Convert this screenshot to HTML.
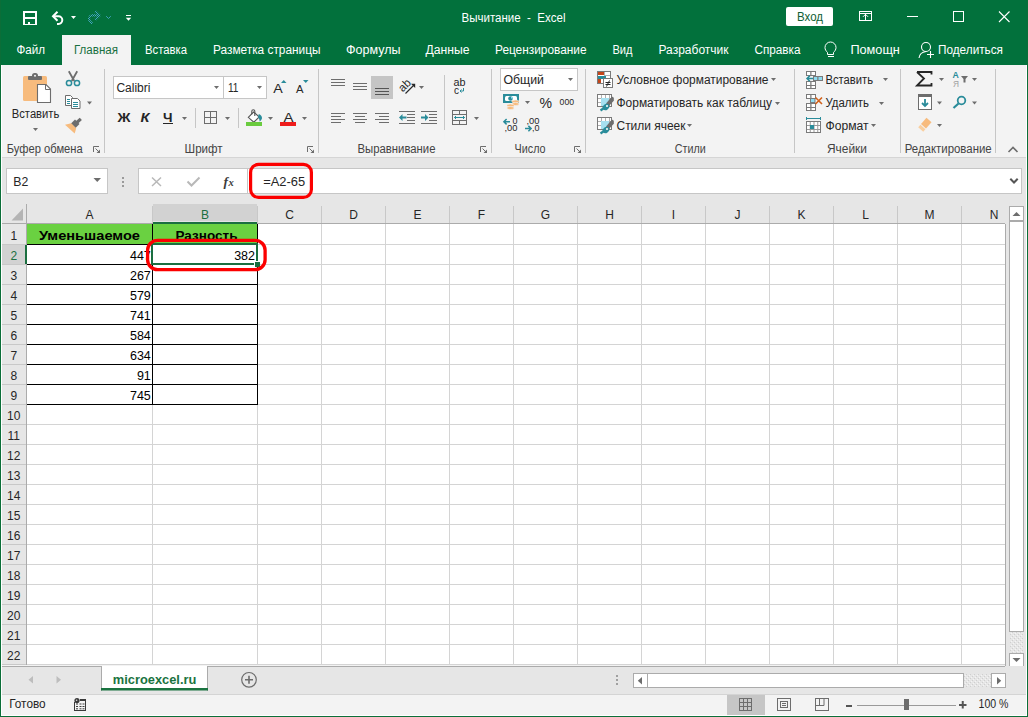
<!DOCTYPE html>
<html><head><meta charset="utf-8"><title>Excel</title>
<style>html,body{margin:0;padding:0;background:#f3f3f3;overflow:hidden}svg{display:block}</style>
</head><body>
<svg width="1028" height="717" viewBox="0 0 1028 717">
<defs><pattern id="dith" width="4" height="4" patternUnits="userSpaceOnUse"><rect width="4" height="4" fill="#e6e6e6"/><rect x="0" y="0" width="1" height="1" fill="#cfcfcf"/><rect x="2" y="2" width="1" height="1" fill="#cfcfcf"/><rect x="1" y="3" width="1" height="1" fill="#f4f4f4"/><rect x="3" y="1" width="1" height="1" fill="#f4f4f4"/></pattern></defs>
<rect x="0" y="0" width="1028" height="717" fill="#f3f3f3"/>
<rect x="0" y="0" width="1028" height="65" fill="#02713c" />
<rect x="23" y="11" width="14" height="14" fill="#fff" />
<rect x="25" y="13" width="10" height="4" fill="#02713c" />
<rect x="25" y="19" width="10" height="5" fill="#02713c" />
<rect x="28" y="22" width="2" height="2" fill="#fff" />
<path d="M53 16.3h5.5a3.8 3.8 0 0 1 0 7.6h-1.5" fill="none" stroke="#fff" stroke-width="2" />
<path d="M57.5 11.8l-4.5 4.5l4.5 4.5" fill="none" stroke="#fff" stroke-width="2" />
<path d="M71 16h5l-2.5 3z" fill="#fff" />
<defs><pattern id="chk" width="2" height="2" patternUnits="userSpaceOnUse"><rect x="0" y="0" width="1" height="1" fill="#45a6c6"/><rect x="1" y="1" width="1" height="1" fill="#45a6c6"/></pattern></defs>
<path d="M99 15.3h-7.2a3.6 3.6 0 0 0 -1.6 6.2l2.2 2.2" fill="none" stroke="url(#chk)" stroke-width="2.2" />
<path d="M95.3 11.2l4.3 4.3l-4.3 4.3" fill="none" stroke="url(#chk)" stroke-width="2.2" />
<path d="M106.2 16.2l2.3 2.3l2.3-2.3" fill="none" stroke="#45a6c6" stroke-width="0.9" />
<rect x="126" y="15" width="5" height="1" fill="#fff" />
<path d="M125.8 17.8h5.4l-2.7 3z" fill="#fff" />
<text xml:space="preserve" x="461.5" y="22" font-size="12" fill="#fff" textLength="104" lengthAdjust="spacingAndGlyphs" font-family="Liberation Sans" >Вычитание  -  Excel</text>
<rect x="786" y="7" width="47" height="19" rx="2" fill="#fff"/>
<text xml:space="preserve" x="797" y="21" font-size="12" fill="#0f5e34" textLength="26" lengthAdjust="spacingAndGlyphs" font-family="Liberation Sans" >Вход</text>
<rect x="859.5" y="11.5" width="12" height="9" fill="none" stroke="#fff" stroke-width="1" />
<rect x="860" y="13" width="11" height="1" fill="#fff" />
<rect x="865" y="14" width="1" height="6" fill="#fff" />
<path d="M863 16.8l2.5-2.5l2.5 2.5" fill="none" stroke="#fff" stroke-width="1" />
<rect x="907" y="16" width="11" height="1" fill="#fff" />
<rect x="953.5" y="11.5" width="10" height="10" fill="none" stroke="#fff" stroke-width="1" />
<path d="M999 11.5l10.5 10.5M1009.5 11.5l-10.5 10.5" fill="none" stroke="#fff" stroke-width="1.1" />
<rect x="62" y="35" width="69" height="30" fill="#f3f3f3" />
<text xml:space="preserve" x="16.5" y="54" font-size="12" fill="#fff" textLength="28.5" lengthAdjust="spacingAndGlyphs" font-family="Liberation Sans" >Файл</text>
<text xml:space="preserve" x="74" y="54" font-size="12" fill="#19703f" textLength="44" lengthAdjust="spacingAndGlyphs" font-family="Liberation Sans" >Главная</text>
<text xml:space="preserve" x="145" y="54" font-size="12" fill="#fff" textLength="42" lengthAdjust="spacingAndGlyphs" font-family="Liberation Sans" >Вставка</text>
<text xml:space="preserve" x="213" y="54" font-size="12" fill="#fff" textLength="107.5" lengthAdjust="spacingAndGlyphs" font-family="Liberation Sans" >Разметка страницы</text>
<text xml:space="preserve" x="346" y="54" font-size="12" fill="#fff" textLength="54.5" lengthAdjust="spacingAndGlyphs" font-family="Liberation Sans" >Формулы</text>
<text xml:space="preserve" x="425.5" y="54" font-size="12" fill="#fff" textLength="44" lengthAdjust="spacingAndGlyphs" font-family="Liberation Sans" >Данные</text>
<text xml:space="preserve" x="495" y="54" font-size="12" fill="#fff" textLength="91.5" lengthAdjust="spacingAndGlyphs" font-family="Liberation Sans" >Рецензирование</text>
<text xml:space="preserve" x="612.5" y="54" font-size="12" fill="#fff" textLength="20" lengthAdjust="spacingAndGlyphs" font-family="Liberation Sans" >Вид</text>
<text xml:space="preserve" x="658.5" y="54" font-size="12" fill="#fff" textLength="70" lengthAdjust="spacingAndGlyphs" font-family="Liberation Sans" >Разработчик</text>
<text xml:space="preserve" x="754.5" y="54" font-size="12" fill="#fff" textLength="46" lengthAdjust="spacingAndGlyphs" font-family="Liberation Sans" >Справка</text>
<text xml:space="preserve" x="850.4" y="54" font-size="12" fill="#fff" textLength="49.5" lengthAdjust="spacingAndGlyphs" font-family="Liberation Sans" >Помощн</text>
<text xml:space="preserve" x="938" y="54" font-size="12" fill="#fff" textLength="65" lengthAdjust="spacingAndGlyphs" font-family="Liberation Sans" >Поделиться</text>
<path d="M827.5 52.5c-1.5-1.5-2.5-3-2.5-5a5.5 5.5 0 0 1 11 0c0 2-1 3.5-2.5 5v2h-6z" fill="none" stroke="#fff" stroke-width="1" />
<rect x="828" y="56" width="6" height="1" fill="#fff" />
<circle cx="926" cy="47" r="4.5" fill="none" stroke="#fff" stroke-width="1.1"/>
<path d="M919 58c0.5-4 3-6 7-6.5" fill="none" stroke="#fff" stroke-width="1.1" />
<path d="M930.5 51v7M927 54.5h7" fill="none" stroke="#fff" stroke-width="1.1" />
<rect x="0" y="65" width="1028" height="92" fill="#f3f3f3" />
<rect x="0" y="157" width="1028" height="1" fill="#d5d5d5" />
<rect x="104" y="69" width="1" height="84" fill="#c6c6c6" />
<rect x="318" y="69" width="1" height="84" fill="#c6c6c6" />
<rect x="491" y="69" width="1" height="84" fill="#c6c6c6" />
<rect x="585" y="69" width="1" height="84" fill="#c6c6c6" />
<rect x="794" y="69" width="1" height="84" fill="#c6c6c6" />
<rect x="900" y="69" width="1" height="84" fill="#c6c6c6" />
<rect x="995" y="69" width="1" height="84" fill="#c6c6c6" />
<rect x="195" y="108" width="1" height="20" fill="#c6c6c6" />
<rect x="238" y="108" width="1" height="20" fill="#c6c6c6" />
<rect x="444" y="75" width="1" height="55" fill="#c6c6c6" />
<text xml:space="preserve" x="6.7" y="153" font-size="12" fill="#444" textLength="76" lengthAdjust="spacingAndGlyphs" font-family="Liberation Sans" >Буфер обмена</text>
<text xml:space="preserve" x="184.6" y="153" font-size="12" fill="#444" textLength="38" lengthAdjust="spacingAndGlyphs" font-family="Liberation Sans" >Шрифт</text>
<text xml:space="preserve" x="357.5" y="153" font-size="12" fill="#444" textLength="78" lengthAdjust="spacingAndGlyphs" font-family="Liberation Sans" >Выравнивание</text>
<text xml:space="preserve" x="514.6" y="153" font-size="12" fill="#444" textLength="31" lengthAdjust="spacingAndGlyphs" font-family="Liberation Sans" >Число</text>
<text xml:space="preserve" x="674.7" y="153" font-size="12" fill="#444" textLength="31" lengthAdjust="spacingAndGlyphs" font-family="Liberation Sans" >Стили</text>
<text xml:space="preserve" x="827" y="153" font-size="12" fill="#444" textLength="40" lengthAdjust="spacingAndGlyphs" font-family="Liberation Sans" >Ячейки</text>
<text xml:space="preserve" x="904.7" y="153" font-size="12" fill="#444" textLength="87" lengthAdjust="spacingAndGlyphs" font-family="Liberation Sans" >Редактирование</text>
<path d="M93.5 152v-5.5h5.5" fill="none" stroke="#6d6d6d" stroke-width="1" />
<path d="M95.5 148.5l3.5 3.5" fill="none" stroke="#6d6d6d" stroke-width="1" />
<path d="M100 149.5v3.5h-3.5z" fill="#6d6d6d" />
<path d="M307.5 152v-5.5h5.5" fill="none" stroke="#6d6d6d" stroke-width="1" />
<path d="M309.5 148.5l3.5 3.5" fill="none" stroke="#6d6d6d" stroke-width="1" />
<path d="M314 149.5v3.5h-3.5z" fill="#6d6d6d" />
<path d="M480.5 152v-5.5h5.5" fill="none" stroke="#6d6d6d" stroke-width="1" />
<path d="M482.5 148.5l3.5 3.5" fill="none" stroke="#6d6d6d" stroke-width="1" />
<path d="M487 149.5v3.5h-3.5z" fill="#6d6d6d" />
<path d="M574.5 152v-5.5h5.5" fill="none" stroke="#6d6d6d" stroke-width="1" />
<path d="M576.5 148.5l3.5 3.5" fill="none" stroke="#6d6d6d" stroke-width="1" />
<path d="M581 149.5v3.5h-3.5z" fill="#6d6d6d" />
<path d="M1008.5 152l4.5-4.5l4.5 4.5" fill="none" stroke="#6d6d6d" stroke-width="1.6" />
<rect x="23" y="76" width="24" height="25" rx="1.5" fill="#f7bb7d"/>
<rect x="28" y="76" width="14" height="4" rx="1" fill="#6d6d6d"/>
<rect x="32" y="73" width="6" height="5" rx="2.5" fill="#6d6d6d"/>
<circle cx="35" cy="75.8" r="1" fill="#f3f3f3"/>
<path d="M37.5 84.5h8.5l4.5 4.5v13.5h-13z" fill="#fff" stroke="#6d6d6d" stroke-width="1.1" />
<path d="M45.5 84.5v5h5" fill="none" stroke="#6d6d6d" stroke-width="1" />
<text xml:space="preserve" x="11.8" y="118" font-size="12" fill="#262626" textLength="47.5" lengthAdjust="spacingAndGlyphs" font-family="Liberation Sans" >Вставить</text>
<path d="M33 128h5l-2.5 3z" fill="#6d6d6d" />
<path d="M68.8 71.2l5.5 9.8M77.2 71.2l-5.5 9.8" fill="none" stroke="#6d6d6d" stroke-width="1.8" />
<circle cx="69" cy="83" r="2.6" fill="none" stroke="#2a8c9a" stroke-width="1.5"/>
<circle cx="77" cy="83" r="2.6" fill="none" stroke="#2a8c9a" stroke-width="1.5"/>
<path d="M65.5 95.5h5l2 2v8h-7z" fill="#fff" stroke="#6d6d6d" stroke-width="1" />
<path d="M71.5 98.5h6l2.5 2.5v7.5h-8.5z" fill="#fff" stroke="#6d6d6d" stroke-width="1" />
<rect x="67" y="99" width="3" height="1" fill="#2a8c9a" />
<rect x="67" y="101" width="3" height="1" fill="#2a8c9a" />
<rect x="67" y="103" width="3" height="1" fill="#2a8c9a" />
<rect x="73" y="102" width="5" height="1" fill="#2a8c9a" />
<rect x="73" y="104" width="5" height="1" fill="#2a8c9a" />
<rect x="73" y="106" width="5" height="1" fill="#2a8c9a" />
<path d="M87 101.5h5l-2.5 3z" fill="#6d6d6d" />
<path d="M80.8 118.8l-4.5 4.2" fill="none" stroke="#6d6d6d" stroke-width="3.2" />
<path d="M71 123.5l4-4l4.5 4.5l-4 4z" fill="#6d6d6d" />
<path d="M65 124.8l6.2-1.5l5 5l-1.5 5.2z" fill="#f7bb7d" />
<rect x="113.5" y="76.5" width="110" height="22" fill="#fff" stroke="#c6c6c6" stroke-width="1" />
<rect x="223.5" y="76.5" width="43" height="22" fill="#fff" stroke="#c6c6c6" stroke-width="1" />
<text xml:space="preserve" x="116.4" y="92" font-size="12" fill="#262626" textLength="34" lengthAdjust="spacingAndGlyphs" font-family="Liberation Sans" >Calibri</text>
<text xml:space="preserve" x="228" y="92" font-size="12" fill="#262626" textLength="10.5" lengthAdjust="spacingAndGlyphs" font-family="Liberation Sans" >11</text>
<path d="M214 86h5l-2.5 3z" fill="#6d6d6d" />
<path d="M257 86h5l-2.5 3z" fill="#6d6d6d" />
<text xml:space="preserve" x="273.3" y="93" font-size="13" fill="#262626" textLength="9.5" lengthAdjust="spacingAndGlyphs" font-family="Liberation Sans" >A</text>
<path d="M281 83h5.5l-2.75-3z" fill="#2a8c9a" />
<text xml:space="preserve" x="296" y="93" font-size="10" fill="#262626" textLength="7.5" lengthAdjust="spacingAndGlyphs" font-family="Liberation Sans" >A</text>
<path d="M303 80h5.5l-2.75 3z" fill="#2a8c9a" />
<text xml:space="preserve" x="117.5" y="122" font-size="13" fill="#262626" font-weight="bold" textLength="13" lengthAdjust="spacingAndGlyphs" font-family="Liberation Sans" >Ж</text>
<text xml:space="preserve" x="140.5" y="122" font-size="12" fill="#262626" font-weight="bold" textLength="9" lengthAdjust="spacingAndGlyphs" font-family="Liberation Sans" font-style="italic">К</text>
<text xml:space="preserve" x="163" y="122" font-size="12" fill="#262626" font-weight="bold" textLength="9.5" lengthAdjust="spacingAndGlyphs" font-family="Liberation Sans" >Ч</text>
<rect x="163" y="123" width="10" height="1" fill="#262626" />
<path d="M182 117h5l-2.5 3z" fill="#6d6d6d" />
<rect x="204.5" y="111.5" width="12" height="12" fill="none" stroke="#6d6d6d" stroke-width="1" />
<rect x="205" y="117" width="11" height="1" fill="#6d6d6d" />
<rect x="210" y="112" width="1" height="11" fill="#6d6d6d" />
<path d="M225 117h5l-2.5 3z" fill="#6d6d6d" />
<path d="M248.3 117.3l5.3-5.3l5.6 5l-5.4 5.2z" fill="#fff" stroke="#555" stroke-width="1.1" />
<path d="M251.8 114.2v-3a1.5 1.5 0 0 1 3 0v4.8" fill="none" stroke="#555" stroke-width="1.1" />
<path d="M258.8 114c2 0.8 3.4 2.4 3.2 4.2c-0.3 1.6-1.4 2.8-2.4 3.3c0-1.8-0.6-3.3-1.6-4.3z" fill="#2a8c9a" />
<rect x="246" y="122" width="16" height="4" fill="#6acb3e" />
<path d="M268 117h5l-2.5 3z" fill="#6d6d6d" />
<text xml:space="preserve" x="283.5" y="121.5" font-size="13" fill="#262626" textLength="10" lengthAdjust="spacingAndGlyphs" font-family="Liberation Sans" >A</text>
<rect x="280" y="122" width="16" height="4" fill="#ee1c1c" />
<path d="M302 117h5l-2.5 3z" fill="#6d6d6d" />
<rect x="331" y="79" width="14" height="1" fill="#6d6d6d" />
<rect x="331" y="82" width="14" height="1" fill="#6d6d6d" />
<rect x="331" y="85" width="14" height="1" fill="#6d6d6d" />
<rect x="353" y="83" width="14" height="1" fill="#6d6d6d" />
<rect x="353" y="86" width="14" height="1" fill="#6d6d6d" />
<rect x="353" y="89" width="14" height="1" fill="#6d6d6d" />
<rect x="371" y="76" width="22" height="23" fill="#c5c5c5" />
<rect x="375" y="88" width="14" height="1" fill="#555" />
<rect x="375" y="91" width="14" height="1" fill="#555" />
<rect x="375" y="94" width="14" height="1" fill="#555" />
<text x="0" y="4" font-size="11.5" fill="#262626" text-anchor="middle" font-family="Liberation Sans" transform="translate(404.5 85.2) rotate(-45)">ab</text>
<path d="M405.5 93.5l8-8" fill="none" stroke="#262626" stroke-width="1.1" />
<path d="M415.2 83.8v4.2l-4.2-4.2z" fill="#262626" />
<path d="M419 86h5l-2.5 3z" fill="#6d6d6d" />
<rect x="331" y="113" width="14" height="1" fill="#6d6d6d" />
<rect x="353" y="113" width="14" height="1" fill="#6d6d6d" />
<rect x="375" y="113" width="14" height="1" fill="#6d6d6d" />
<rect x="331" y="116" width="10" height="1" fill="#6d6d6d" />
<rect x="355" y="116" width="10" height="1" fill="#6d6d6d" />
<rect x="379" y="116" width="10" height="1" fill="#6d6d6d" />
<rect x="331" y="119" width="14" height="1" fill="#6d6d6d" />
<rect x="353" y="119" width="14" height="1" fill="#6d6d6d" />
<rect x="375" y="119" width="14" height="1" fill="#6d6d6d" />
<rect x="331" y="122" width="10" height="1" fill="#6d6d6d" />
<rect x="355" y="122" width="10" height="1" fill="#6d6d6d" />
<rect x="379" y="122" width="10" height="1" fill="#6d6d6d" />
<rect x="399" y="111" width="16" height="1" fill="#6d6d6d" />
<rect x="399" y="123" width="16" height="1" fill="#6d6d6d" />
<rect x="407" y="114" width="8" height="1" fill="#6d6d6d" />
<rect x="407" y="117" width="8" height="1" fill="#6d6d6d" />
<rect x="407" y="120" width="8" height="1" fill="#6d6d6d" />
<path d="M399 117.5l3.5-3.5v2.5h4v2h-4v2.5z" fill="#2a8c9a" />
<rect x="421" y="111" width="16" height="1" fill="#6d6d6d" />
<rect x="421" y="123" width="16" height="1" fill="#6d6d6d" />
<rect x="429" y="114" width="8" height="1" fill="#6d6d6d" />
<rect x="429" y="117" width="8" height="1" fill="#6d6d6d" />
<rect x="429" y="120" width="8" height="1" fill="#6d6d6d" />
<path d="M428.5 117.5l-3.5-3.5v2.5h-4v2h4v2.5z" fill="#2a8c9a" />
<text xml:space="preserve" x="453.5" y="86" font-size="10" fill="#262626" textLength="12" lengthAdjust="spacingAndGlyphs" font-family="Liberation Sans" >ab</text>
<text xml:space="preserve" x="454" y="93.5" font-size="10" fill="#262626" font-family="Liberation Sans" >c</text>
<path d="M463.5 88v3h-3.5M461.5 89.5l-1.5 1.5l1.5 1.5" fill="none" stroke="#2a8c9a" stroke-width="1" />
<rect x="452.5" y="110.5" width="14" height="14" fill="none" stroke="#6d6d6d" stroke-width="1" />
<rect x="453" y="114" width="13" height="1" fill="#6d6d6d" />
<rect x="453" y="120" width="13" height="1" fill="#6d6d6d" />
<rect x="459" y="111" width="1" height="3" fill="#6d6d6d" />
<rect x="459" y="121" width="1" height="3" fill="#6d6d6d" />
<path d="M454.5 117.5h10M456 116l-1.5 1.5l1.5 1.5M463 116l1.5 1.5l-1.5 1.5" fill="none" stroke="#2a8c9a" stroke-width="1" />
<path d="M474 117h5l-2.5 3z" fill="#6d6d6d" />
<rect x="500.5" y="68.5" width="77" height="22" fill="#fff" stroke="#c6c6c6" stroke-width="1" />
<text xml:space="preserve" x="503.4" y="84" font-size="12" fill="#262626" textLength="40.5" lengthAdjust="spacingAndGlyphs" font-family="Liberation Sans" >Общий</text>
<path d="M568 78h5l-2.5 3z" fill="#6d6d6d" />
<rect x="503" y="94" width="16" height="9" fill="#2a8c9a" />
<rect x="505" y="96" width="12" height="5" rx="1.5" fill="#fff"/>
<circle cx="510.5" cy="98.5" r="2.3" fill="#2a8c9a"/>
<rect x="511" y="97" width="2" height="1.5" fill="#8fdcf0" />
<ellipse cx="515.5" cy="101.5" rx="3.6" ry="1.5" fill="#f7bb7d" stroke="#f3f3f3" stroke-width="0.6"/>
<ellipse cx="515.5" cy="104" rx="3.6" ry="1.5" fill="#f7bb7d" stroke="#f3f3f3" stroke-width="0.6"/>
<ellipse cx="510.5" cy="105.5" rx="3.6" ry="1.5" fill="#f7bb7d" stroke="#f3f3f3" stroke-width="0.6"/>
<ellipse cx="510.5" cy="108" rx="3.6" ry="1.5" fill="#f7bb7d" stroke="#f3f3f3" stroke-width="0.6"/>
<path d="M525 101h5l-2.5 3z" fill="#6d6d6d" />
<text xml:space="preserve" x="539.5" y="108" font-size="14" fill="#262626" textLength="12.5" lengthAdjust="spacingAndGlyphs" font-family="Liberation Sans" >%</text>
<text xml:space="preserve" x="559.6" y="105" font-size="9.5" fill="#262626" textLength="14.5" lengthAdjust="spacingAndGlyphs" font-family="Liberation Sans" >000</text>
<text xml:space="preserve" x="512.5" y="123.6" font-size="8.5" fill="#262626" textLength="5" lengthAdjust="spacingAndGlyphs" font-family="Liberation Sans" >0</text>
<text xml:space="preserve" x="504.5" y="130.9" font-size="8.5" fill="#262626" textLength="13" lengthAdjust="spacingAndGlyphs" font-family="Liberation Sans" >,00</text>
<path d="M503.8 121.7h6.2M506.6 119l-2.7 2.7l2.7 2.7" fill="none" stroke="#2a8c9a" stroke-width="1.5" />
<text xml:space="preserve" x="526.5" y="123.6" font-size="8.5" fill="#262626" textLength="13" lengthAdjust="spacingAndGlyphs" font-family="Liberation Sans" >,00</text>
<text xml:space="preserve" x="532" y="130.9" font-size="8.5" fill="#262626" textLength="7.5" lengthAdjust="spacingAndGlyphs" font-family="Liberation Sans" >,0</text>
<path d="M525 128.6h6.2M528.4 125.9l2.7 2.7l-2.7 2.7" fill="none" stroke="#2a8c9a" stroke-width="1.5" />
<rect x="597.5" y="71.5" width="13" height="12" fill="#fff" stroke="#7a7a7a" stroke-width="1" />
<rect x="604" y="72" width="1" height="4" fill="#b0b0b0" />
<rect x="604" y="75" width="6" height="1" fill="#b0b0b0" />
<rect x="598" y="72" width="6" height="3" fill="#c4461a" />
<rect x="598" y="76" width="8" height="3" fill="#2a8c9a" />
<rect x="598" y="79" width="3" height="4" fill="#c4461a" />
<rect x="603.5" y="78.5" width="9" height="9" fill="#fff" stroke="#7a7a7a" stroke-width="1" />
<path d="M605.5 82.5h5M605.5 84.5h5M609.5 80.5l-3 6" fill="none" stroke="#262626" stroke-width="1" />
<text xml:space="preserve" x="616.5" y="84" font-size="12" fill="#262626" textLength="152" lengthAdjust="spacingAndGlyphs" font-family="Liberation Sans" >Условное форматирование</text>
<path d="M771 78h5l-2.5 3z" fill="#6d6d6d" />
<rect x="597.5" y="94.5" width="14" height="12" fill="#fff" stroke="#7a7a7a" stroke-width="1" />
<rect x="601" y="95" width="1" height="11" fill="#b0b0b0" />
<rect x="605" y="95" width="1" height="11" fill="#b0b0b0" />
<rect x="609" y="95" width="1" height="11" fill="#b0b0b0" />
<rect x="598" y="98" width="13" height="1" fill="#b0b0b0" />
<rect x="598" y="102" width="13" height="1" fill="#b0b0b0" />
<rect x="601" y="98" width="8" height="8" fill="#a6e0f0" />
<path d="M606 103.5l6-7l1.8 1.2v3l-4.8 5.3z" fill="#6d6d6d" />
<ellipse cx="0" cy="0" rx="3.6" ry="2.8" fill="#2a8c9a" transform="translate(606 107) rotate(-40)"/>
<path d="M600.5 110.5l3.5-2.5" fill="none" stroke="#2a8c9a" stroke-width="2.2" />
<circle cx="607" cy="106" r="1" fill="#fff"/>
<rect x="597.5" y="117.5" width="14" height="12" fill="#fff" stroke="#7a7a7a" stroke-width="1" />
<rect x="601" y="118" width="1" height="11" fill="#b0b0b0" />
<rect x="605" y="118" width="1" height="11" fill="#b0b0b0" />
<rect x="609" y="118" width="1" height="11" fill="#b0b0b0" />
<rect x="598" y="121" width="13" height="1" fill="#b0b0b0" />
<rect x="598" y="125" width="13" height="1" fill="#b0b0b0" />
<rect x="601" y="121" width="8" height="8" fill="#a6e0f0" />
<path d="M606 126.5l6-7l1.8 1.2v3l-4.8 5.3z" fill="#6d6d6d" />
<ellipse cx="0" cy="0" rx="3.6" ry="2.8" fill="#2a8c9a" transform="translate(606 130) rotate(-40)"/>
<path d="M600.5 133.5l3.5-2.5" fill="none" stroke="#2a8c9a" stroke-width="2.2" />
<circle cx="607" cy="129" r="1" fill="#fff"/>
<text xml:space="preserve" x="616.5" y="107" font-size="12" fill="#262626" textLength="155.5" lengthAdjust="spacingAndGlyphs" font-family="Liberation Sans" >Форматировать как таблицу</text>
<path d="M775 102h5l-2.5 3z" fill="#6d6d6d" />
<text xml:space="preserve" x="616.5" y="130" font-size="12" fill="#262626" textLength="69" lengthAdjust="spacingAndGlyphs" font-family="Liberation Sans" >Стили ячеек</text>
<path d="M687 124h5l-2.5 3z" fill="#6d6d6d" />
<rect x="806.5" y="71.5" width="4.5" height="4" fill="#fff" stroke="#7a7a7a" stroke-width="1" />
<rect x="811.0" y="71.5" width="4.5" height="4" fill="#fff" stroke="#7a7a7a" stroke-width="1" />
<rect x="813.5" y="76.5" width="4.5" height="4" fill="#8fdcf0" stroke="#7a7a7a" stroke-width="1" />
<rect x="818.0" y="76.5" width="4.5" height="4" fill="#8fdcf0" stroke="#7a7a7a" stroke-width="1" />
<rect x="806.5" y="81.5" width="4.5" height="4" fill="#fff" stroke="#7a7a7a" stroke-width="1" />
<rect x="811.0" y="81.5" width="4.5" height="4" fill="#fff" stroke="#7a7a7a" stroke-width="1" />
<rect x="806.5" y="85.5" width="4.5" height="3" fill="#fff" stroke="#7a7a7a" stroke-width="1" />
<rect x="811.0" y="85.5" width="4.5" height="3" fill="#fff" stroke="#7a7a7a" stroke-width="1" />
<path d="M807 78.5h6M809.8 75.8l-2.7 2.7l2.7 2.7" fill="none" stroke="#2a8c9a" stroke-width="1.6" />
<text xml:space="preserve" x="825.5" y="84" font-size="12" fill="#262626" textLength="47.5" lengthAdjust="spacingAndGlyphs" font-family="Liberation Sans" >Вставить</text>
<path d="M883 78h5l-2.5 3z" fill="#6d6d6d" />
<rect x="806.5" y="94.5" width="4.5" height="4" fill="#fff" stroke="#7a7a7a" stroke-width="1" />
<rect x="811.0" y="94.5" width="4.5" height="4" fill="#fff" stroke="#7a7a7a" stroke-width="1" />
<rect x="810.5" y="98.5" width="4.5" height="4" fill="#8fdcf0" stroke="#7a7a7a" stroke-width="1" />
<rect x="806.5" y="103.5" width="4.5" height="4" fill="#fff" stroke="#7a7a7a" stroke-width="1" />
<rect x="811.0" y="103.5" width="4.5" height="4" fill="#fff" stroke="#7a7a7a" stroke-width="1" />
<rect x="806.5" y="107.5" width="4.5" height="3" fill="#fff" stroke="#7a7a7a" stroke-width="1" />
<rect x="811.0" y="107.5" width="4.5" height="3" fill="#fff" stroke="#7a7a7a" stroke-width="1" />
<path d="M815.5 97.5l6.5 6.5M822 97.5l-6.5 6.5" fill="none" stroke="#d1611a" stroke-width="1.6" />
<text xml:space="preserve" x="825.5" y="107" font-size="12" fill="#262626" textLength="43.5" lengthAdjust="spacingAndGlyphs" font-family="Liberation Sans" >Удалить</text>
<path d="M879 102h5l-2.5 3z" fill="#6d6d6d" />
<path d="M806.5 118.5h14M806.5 117v3M820.5 117v3" fill="none" stroke="#2a8c9a" stroke-width="1" />
<rect x="806.5" y="121.5" width="14" height="11" fill="#fff" stroke="#7a7a7a" stroke-width="1" />
<rect x="809.75" y="122" width="1" height="10" fill="#9a9a9a" />
<rect x="813.5" y="122" width="1" height="10" fill="#9a9a9a" />
<rect x="817.25" y="122" width="1" height="10" fill="#9a9a9a" />
<rect x="807" y="125" width="13" height="1" fill="#9a9a9a" />
<rect x="807" y="129" width="13" height="1" fill="#9a9a9a" />
<rect x="810" y="125" width="4" height="4" fill="#2a8c9a" />
<text xml:space="preserve" x="825.5" y="130" font-size="12" fill="#262626" textLength="43" lengthAdjust="spacingAndGlyphs" font-family="Liberation Sans" >Формат</text>
<path d="M871 124h5l-2.5 3z" fill="#6d6d6d" />
<path d="M917 72h14.5v2.5M917 72l7 6.5l-7 7h14.5v-2.5" fill="none" stroke="#262626" stroke-width="1.8" />
<path d="M939 78h5l-2.5 3z" fill="#6d6d6d" />
<text xml:space="preserve" x="952.6" y="77.6" font-size="8.8" fill="#2a8c9a" font-weight="bold" textLength="6.3" lengthAdjust="spacingAndGlyphs" font-family="Liberation Sans" >A</text>
<text xml:space="preserve" x="953" y="86.9" font-size="8.8" fill="#a0a0a0" textLength="6" lengthAdjust="spacingAndGlyphs" font-family="Liberation Sans" >Я</text>
<path d="M961 76h7l-2.5 3v3.5h-2v-3.5z" fill="#6d6d6d" />
<path d="M972 78h5l-2.5 3z" fill="#6d6d6d" />
<rect x="918.5" y="94.5" width="13" height="15" fill="#fff" stroke="#6d6d6d" stroke-width="1" />
<rect x="918" y="94" width="14" height="3" fill="#6d6d6d" />
<path d="M925 99v7M922 103l3 3l3-3" fill="none" stroke="#2a8c9a" stroke-width="1.8" />
<path d="M937 101.5h5l-2.5 3z" fill="#6d6d6d" />
<circle cx="961.5" cy="100.5" r="3.8" fill="none" stroke="#2a8c9a" stroke-width="1.8"/>
<path d="M958.5 103.5l-5 4.5" fill="none" stroke="#2a8c9a" stroke-width="2.2" />
<path d="M972 101.5h5l-2.5 3z" fill="#6d6d6d" />
<path d="M921 124l5.5-6.2l5 4.5l-5.5 6.2z" fill="#f7bb7d" />
<path d="M918.2 127.2l2.2-2.5l5 4.5l-2.2 2.5z" fill="#f9cf9f" />
<path d="M937 124h5l-2.5 3z" fill="#6d6d6d" />
<rect x="0" y="158" width="1028" height="46" fill="#e6e6e6" />
<rect x="6.5" y="168.5" width="101" height="25" fill="#fff" stroke="#c6c6c6" stroke-width="1" />
<text xml:space="preserve" x="13.3" y="186" font-size="12" fill="#262626" textLength="15" lengthAdjust="spacingAndGlyphs" font-family="Liberation Sans" >B2</text>
<path d="M93.5 178h7.5l-3.75 4z" fill="#6d6d6d" />
<rect x="122" y="177" width="2" height="2" fill="#9a9a9a" />
<rect x="122" y="181" width="2" height="2" fill="#9a9a9a" />
<rect x="122" y="185" width="2" height="2" fill="#9a9a9a" />
<rect x="138.5" y="168.5" width="109" height="25" fill="#fff" stroke="#c6c6c6" stroke-width="1" />
<path d="M152 177.5l9 8.5M161 177.5l-9 8.5" fill="none" stroke="#b8b8b8" stroke-width="1.5" />
<path d="M187.5 181.5l4 4l8-8" fill="none" stroke="#b8b8b8" stroke-width="2" />
<text x="223.5" y="186" font-size="13.5" fill="#3c3c3c" font-weight="bold" font-style="italic" font-family="Liberation Serif">f</text>
<text x="228.6" y="186" font-size="10.5" fill="#3c3c3c" font-weight="bold" font-style="italic" font-family="Liberation Serif">x</text>
<rect x="247.5" y="168.5" width="774" height="25" fill="#fff" stroke="#c6c6c6" stroke-width="1" />
<text xml:space="preserve" x="263.2" y="186" font-size="12.5" fill="#262626" textLength="42" lengthAdjust="spacingAndGlyphs" font-family="Liberation Sans" >=A2-65</text>
<path d="M1010.3 178.8l3.7 3.7l3.7-3.7" fill="none" stroke="#555" stroke-width="2" />
<rect x="250.6" y="164.4" width="60.8" height="33" rx="8" ry="8" fill="none" stroke="#fc0000" stroke-width="3.2"/>
<rect x="1" y="204" width="1008" height="20" fill="#e6e6e6" />
<path d="M11.5 220.5h11.5v-12z" fill="#b4b4b4" />
<rect x="153" y="204" width="104" height="19" fill="#d2d2d2" />
<rect x="27" y="224" width="978" height="441" fill="#ffffff" />
<rect x="1" y="224" width="26" height="441" fill="#e6e6e6" />
<rect x="1" y="245" width="25" height="19" fill="#d2d2d2" />
<rect x="152" y="224" width="1" height="441" fill="#d4d4d4" />
<rect x="257" y="224" width="1" height="441" fill="#d4d4d4" />
<rect x="321" y="224" width="1" height="441" fill="#d4d4d4" />
<rect x="385" y="224" width="1" height="441" fill="#d4d4d4" />
<rect x="449" y="224" width="1" height="441" fill="#d4d4d4" />
<rect x="513" y="224" width="1" height="441" fill="#d4d4d4" />
<rect x="577" y="224" width="1" height="441" fill="#d4d4d4" />
<rect x="641" y="224" width="1" height="441" fill="#d4d4d4" />
<rect x="705" y="224" width="1" height="441" fill="#d4d4d4" />
<rect x="769" y="224" width="1" height="441" fill="#d4d4d4" />
<rect x="833" y="224" width="1" height="441" fill="#d4d4d4" />
<rect x="897" y="224" width="1" height="441" fill="#d4d4d4" />
<rect x="961" y="224" width="1" height="441" fill="#d4d4d4" />
<rect x="27" y="244" width="978" height="1" fill="#d4d4d4" />
<rect x="27" y="264" width="978" height="1" fill="#d4d4d4" />
<rect x="27" y="284" width="978" height="1" fill="#d4d4d4" />
<rect x="27" y="304" width="978" height="1" fill="#d4d4d4" />
<rect x="27" y="324" width="978" height="1" fill="#d4d4d4" />
<rect x="27" y="344" width="978" height="1" fill="#d4d4d4" />
<rect x="27" y="364" width="978" height="1" fill="#d4d4d4" />
<rect x="27" y="384" width="978" height="1" fill="#d4d4d4" />
<rect x="27" y="404" width="978" height="1" fill="#d4d4d4" />
<rect x="27" y="424" width="978" height="1" fill="#d4d4d4" />
<rect x="27" y="444" width="978" height="1" fill="#d4d4d4" />
<rect x="27" y="464" width="978" height="1" fill="#d4d4d4" />
<rect x="27" y="484" width="978" height="1" fill="#d4d4d4" />
<rect x="27" y="504" width="978" height="1" fill="#d4d4d4" />
<rect x="27" y="524" width="978" height="1" fill="#d4d4d4" />
<rect x="27" y="544" width="978" height="1" fill="#d4d4d4" />
<rect x="27" y="564" width="978" height="1" fill="#d4d4d4" />
<rect x="27" y="584" width="978" height="1" fill="#d4d4d4" />
<rect x="27" y="604" width="978" height="1" fill="#d4d4d4" />
<rect x="27" y="624" width="978" height="1" fill="#d4d4d4" />
<rect x="27" y="644" width="978" height="1" fill="#d4d4d4" />
<rect x="27" y="664" width="978" height="1" fill="#d4d4d4" />
<rect x="152" y="206" width="1" height="17" fill="#c8c8c8" />
<rect x="257" y="206" width="1" height="17" fill="#c8c8c8" />
<rect x="321" y="206" width="1" height="17" fill="#c8c8c8" />
<rect x="385" y="206" width="1" height="17" fill="#c8c8c8" />
<rect x="449" y="206" width="1" height="17" fill="#c8c8c8" />
<rect x="513" y="206" width="1" height="17" fill="#c8c8c8" />
<rect x="577" y="206" width="1" height="17" fill="#c8c8c8" />
<rect x="641" y="206" width="1" height="17" fill="#c8c8c8" />
<rect x="705" y="206" width="1" height="17" fill="#c8c8c8" />
<rect x="769" y="206" width="1" height="17" fill="#c8c8c8" />
<rect x="833" y="206" width="1" height="17" fill="#c8c8c8" />
<rect x="897" y="206" width="1" height="17" fill="#c8c8c8" />
<rect x="961" y="206" width="1" height="17" fill="#c8c8c8" />
<rect x="26" y="204" width="1" height="461" fill="#ababab" />
<rect x="1" y="244" width="25" height="1" fill="#c8c8c8" />
<rect x="1" y="264" width="25" height="1" fill="#c8c8c8" />
<rect x="1" y="284" width="25" height="1" fill="#c8c8c8" />
<rect x="1" y="304" width="25" height="1" fill="#c8c8c8" />
<rect x="1" y="324" width="25" height="1" fill="#c8c8c8" />
<rect x="1" y="344" width="25" height="1" fill="#c8c8c8" />
<rect x="1" y="364" width="25" height="1" fill="#c8c8c8" />
<rect x="1" y="384" width="25" height="1" fill="#c8c8c8" />
<rect x="1" y="404" width="25" height="1" fill="#c8c8c8" />
<rect x="1" y="424" width="25" height="1" fill="#c8c8c8" />
<rect x="1" y="444" width="25" height="1" fill="#c8c8c8" />
<rect x="1" y="464" width="25" height="1" fill="#c8c8c8" />
<rect x="1" y="484" width="25" height="1" fill="#c8c8c8" />
<rect x="1" y="504" width="25" height="1" fill="#c8c8c8" />
<rect x="1" y="524" width="25" height="1" fill="#c8c8c8" />
<rect x="1" y="544" width="25" height="1" fill="#c8c8c8" />
<rect x="1" y="564" width="25" height="1" fill="#c8c8c8" />
<rect x="1" y="584" width="25" height="1" fill="#c8c8c8" />
<rect x="1" y="604" width="25" height="1" fill="#c8c8c8" />
<rect x="1" y="624" width="25" height="1" fill="#c8c8c8" />
<rect x="1" y="644" width="25" height="1" fill="#c8c8c8" />
<rect x="1" y="664" width="25" height="1" fill="#c8c8c8" />
<rect x="1" y="223" width="1004" height="1" fill="#ababab" />
<rect x="153" y="221" width="104" height="1" fill="#e4e4e4" />
<rect x="153" y="222" width="104" height="1" fill="#1b6f40" />
<rect x="153" y="223" width="104" height="1" fill="#1b6f40" />
<rect x="25" y="245" width="2" height="19" fill="#1b6f40" />
<rect x="1005" y="224" width="1" height="442" fill="#ababab" />
<text xml:space="preserve" x="89.5" y="219" font-size="12" fill="#262626" text-anchor="middle" font-family="Liberation Sans" >A</text>
<text xml:space="preserve" x="205.0" y="219" font-size="12" fill="#1b6f40" text-anchor="middle" font-family="Liberation Sans" >B</text>
<text xml:space="preserve" x="289.5" y="219" font-size="12" fill="#262626" text-anchor="middle" font-family="Liberation Sans" >C</text>
<text xml:space="preserve" x="353.5" y="219" font-size="12" fill="#262626" text-anchor="middle" font-family="Liberation Sans" >D</text>
<text xml:space="preserve" x="417.5" y="219" font-size="12" fill="#262626" text-anchor="middle" font-family="Liberation Sans" >E</text>
<text xml:space="preserve" x="481.5" y="219" font-size="12" fill="#262626" text-anchor="middle" font-family="Liberation Sans" >F</text>
<text xml:space="preserve" x="545.5" y="219" font-size="12" fill="#262626" text-anchor="middle" font-family="Liberation Sans" >G</text>
<text xml:space="preserve" x="609.5" y="219" font-size="12" fill="#262626" text-anchor="middle" font-family="Liberation Sans" >H</text>
<text xml:space="preserve" x="673.5" y="219" font-size="12" fill="#262626" text-anchor="middle" font-family="Liberation Sans" >I</text>
<text xml:space="preserve" x="737.5" y="219" font-size="12" fill="#262626" text-anchor="middle" font-family="Liberation Sans" >J</text>
<text xml:space="preserve" x="801.5" y="219" font-size="12" fill="#262626" text-anchor="middle" font-family="Liberation Sans" >K</text>
<text xml:space="preserve" x="865.5" y="219" font-size="12" fill="#262626" text-anchor="middle" font-family="Liberation Sans" >L</text>
<text xml:space="preserve" x="929.5" y="219" font-size="12" fill="#262626" text-anchor="middle" font-family="Liberation Sans" >M</text>
<text xml:space="preserve" x="994" y="219" font-size="12" fill="#262626" text-anchor="middle" font-family="Liberation Sans" >N</text>
<text xml:space="preserve" x="13.8" y="240" font-size="12" fill="#262626" text-anchor="middle" font-family="Liberation Sans" >1</text>
<text xml:space="preserve" x="13.8" y="260" font-size="12" fill="#1b6f40" text-anchor="middle" font-family="Liberation Sans" >2</text>
<text xml:space="preserve" x="13.8" y="280" font-size="12" fill="#262626" text-anchor="middle" font-family="Liberation Sans" >3</text>
<text xml:space="preserve" x="13.8" y="300" font-size="12" fill="#262626" text-anchor="middle" font-family="Liberation Sans" >4</text>
<text xml:space="preserve" x="13.8" y="320" font-size="12" fill="#262626" text-anchor="middle" font-family="Liberation Sans" >5</text>
<text xml:space="preserve" x="13.8" y="340" font-size="12" fill="#262626" text-anchor="middle" font-family="Liberation Sans" >6</text>
<text xml:space="preserve" x="13.8" y="360" font-size="12" fill="#262626" text-anchor="middle" font-family="Liberation Sans" >7</text>
<text xml:space="preserve" x="13.8" y="380" font-size="12" fill="#262626" text-anchor="middle" font-family="Liberation Sans" >8</text>
<text xml:space="preserve" x="13.8" y="400" font-size="12" fill="#262626" text-anchor="middle" font-family="Liberation Sans" >9</text>
<text xml:space="preserve" x="13.8" y="420" font-size="12" fill="#262626" text-anchor="middle" font-family="Liberation Sans" >10</text>
<text xml:space="preserve" x="13.8" y="440" font-size="12" fill="#262626" text-anchor="middle" font-family="Liberation Sans" >11</text>
<text xml:space="preserve" x="13.8" y="460" font-size="12" fill="#262626" text-anchor="middle" font-family="Liberation Sans" >12</text>
<text xml:space="preserve" x="13.8" y="480" font-size="12" fill="#262626" text-anchor="middle" font-family="Liberation Sans" >13</text>
<text xml:space="preserve" x="13.8" y="500" font-size="12" fill="#262626" text-anchor="middle" font-family="Liberation Sans" >14</text>
<text xml:space="preserve" x="13.8" y="520" font-size="12" fill="#262626" text-anchor="middle" font-family="Liberation Sans" >15</text>
<text xml:space="preserve" x="13.8" y="540" font-size="12" fill="#262626" text-anchor="middle" font-family="Liberation Sans" >16</text>
<text xml:space="preserve" x="13.8" y="560" font-size="12" fill="#262626" text-anchor="middle" font-family="Liberation Sans" >17</text>
<text xml:space="preserve" x="13.8" y="580" font-size="12" fill="#262626" text-anchor="middle" font-family="Liberation Sans" >18</text>
<text xml:space="preserve" x="13.8" y="600" font-size="12" fill="#262626" text-anchor="middle" font-family="Liberation Sans" >19</text>
<text xml:space="preserve" x="13.8" y="620" font-size="12" fill="#262626" text-anchor="middle" font-family="Liberation Sans" >20</text>
<text xml:space="preserve" x="13.8" y="640" font-size="12" fill="#262626" text-anchor="middle" font-family="Liberation Sans" >21</text>
<text xml:space="preserve" x="13.8" y="660" font-size="12" fill="#262626" text-anchor="middle" font-family="Liberation Sans" >22</text>
<rect x="27" y="224" width="230" height="20" fill="#6ad141" />
<rect x="27" y="244" width="231" height="1" fill="#000" />
<rect x="27" y="264" width="231" height="1" fill="#000" />
<rect x="27" y="284" width="231" height="1" fill="#000" />
<rect x="27" y="304" width="231" height="1" fill="#000" />
<rect x="27" y="324" width="231" height="1" fill="#000" />
<rect x="27" y="344" width="231" height="1" fill="#000" />
<rect x="27" y="364" width="231" height="1" fill="#000" />
<rect x="27" y="384" width="231" height="1" fill="#000" />
<rect x="27" y="404" width="231" height="1" fill="#000" />
<rect x="152" y="224" width="1" height="180" fill="#000" />
<rect x="257" y="224" width="1" height="181" fill="#000" />
<text xml:space="preserve" x="89.5" y="240" font-size="13" fill="#000" font-weight="bold" text-anchor="middle" textLength="101" lengthAdjust="spacingAndGlyphs" font-family="Liberation Sans" >Уменьшаемое</text>
<text xml:space="preserve" x="206.5" y="240" font-size="13" fill="#000" font-weight="bold" text-anchor="middle" textLength="62" lengthAdjust="spacingAndGlyphs" font-family="Liberation Sans" >Разность</text>
<text xml:space="preserve" x="150.8" y="260" font-size="12.5" fill="#000" text-anchor="end" font-family="Liberation Sans" >447</text>
<text xml:space="preserve" x="150.8" y="280" font-size="12.5" fill="#000" text-anchor="end" font-family="Liberation Sans" >267</text>
<text xml:space="preserve" x="150.8" y="300" font-size="12.5" fill="#000" text-anchor="end" font-family="Liberation Sans" >579</text>
<text xml:space="preserve" x="150.8" y="320" font-size="12.5" fill="#000" text-anchor="end" font-family="Liberation Sans" >741</text>
<text xml:space="preserve" x="150.8" y="340" font-size="12.5" fill="#000" text-anchor="end" font-family="Liberation Sans" >584</text>
<text xml:space="preserve" x="150.8" y="360" font-size="12.5" fill="#000" text-anchor="end" font-family="Liberation Sans" >634</text>
<text xml:space="preserve" x="150.8" y="380" font-size="12.5" fill="#000" text-anchor="end" font-family="Liberation Sans" >91</text>
<text xml:space="preserve" x="150.8" y="400" font-size="12.5" fill="#000" text-anchor="end" font-family="Liberation Sans" >745</text>
<text xml:space="preserve" x="255" y="260" font-size="12.5" fill="#000" text-anchor="end" font-family="Liberation Sans" >382</text>
<rect x="152" y="244" width="105" height="20" fill="none" stroke="#1b6f40" stroke-width="2"/>
<rect x="255" y="262" width="5" height="5" fill="#1b6f40" />
<rect x="254" y="261" width="1" height="6" fill="#fff" />
<rect x="254" y="261" width="6" height="1" fill="#fff" />
<rect x="147.6" y="240.3" width="117.5" height="29.4" rx="10" ry="10" fill="none" stroke="#fc0000" stroke-width="3.3"/>
<rect x="1006" y="204" width="20" height="462" fill="#e6e6e6" />
<rect x="1009.5" y="206.5" width="14" height="14" fill="#fff" stroke="#ababab" stroke-width="1" />
<path d="M1012.5 216h8l-4-4z" fill="#6d6d6d" />
<rect x="1009.5" y="221.5" width="14" height="410" fill="#fff" stroke="#ababab" stroke-width="1" />
<rect x="1010" y="632" width="13" height="21" fill="url(#dith)"/>
<rect x="1009.5" y="653.5" width="14" height="13" fill="#fff" stroke="#ababab" stroke-width="1" />
<path d="M1012.5 658h8l-4 4z" fill="#6d6d6d" />
<rect x="1" y="666" width="1026" height="29" fill="#e6e6e6" />
<rect x="1" y="666" width="1004" height="1" fill="#ababab" />
<path d="M33 676v7.5l-4.5-3.75z" fill="#bdbdbd" />
<path d="M56.5 676v7.5l4.5-3.75z" fill="#bdbdbd" />
<rect x="102" y="666" width="105" height="24" fill="#fff" />
<rect x="101" y="666" width="1" height="25" fill="#ababab" />
<rect x="207" y="666" width="1" height="25" fill="#ababab" />
<rect x="101" y="688" width="107" height="2.5" fill="#1a7340" />
<text xml:space="preserve" x="112.8" y="683.5" font-size="12.3" fill="#1a7340" font-weight="bold" textLength="83.5" lengthAdjust="spacingAndGlyphs" font-family="Liberation Sans" >microexcel.ru</text>
<circle cx="249" cy="679.8" r="7.3" fill="none" stroke="#6d6d6d" stroke-width="1.2"/>
<path d="M245 679.8h8M249 675.8v8" fill="none" stroke="#6d6d6d" stroke-width="1.6" />
<rect x="616" y="675" width="2" height="2" fill="#a0a0a0" />
<rect x="616" y="679" width="2" height="2" fill="#a0a0a0" />
<rect x="616" y="683" width="2" height="2" fill="#a0a0a0" />
<rect x="633.5" y="673.5" width="14" height="14" fill="#fff" stroke="#ababab" stroke-width="1" />
<path d="M642 677v7.5l-4.2-3.75z" fill="#6d6d6d" />
<rect x="647.5" y="673.5" width="316" height="14" fill="#fff" stroke="#ababab" stroke-width="1" />
<rect x="964" y="674" width="27" height="13" fill="url(#dith)"/>
<rect x="991.5" y="673.5" width="14" height="14" fill="#fff" stroke="#ababab" stroke-width="1" />
<path d="M997 677v7.5l4.2-3.75z" fill="#6d6d6d" />
<rect x="1" y="695" width="1026" height="21" fill="#f3f3f3" />
<text xml:space="preserve" x="9.2" y="708" font-size="12" fill="#262626" textLength="36.5" lengthAdjust="spacingAndGlyphs" font-family="Liberation Sans" >Готово</text>
<rect x="1" y="694" width="1026" height="1" fill="#d4d4d4" />
<rect x="74" y="702" width="1" height="9" fill="#3a3a3a" />
<rect x="85" y="699" width="1" height="12" fill="#3a3a3a" />
<rect x="74" y="710" width="12" height="1" fill="#3a3a3a" />
<rect x="80" y="699" width="6" height="2" fill="#3a3a3a" />
<circle cx="77" cy="700.6" r="2.6" fill="#3a3a3a"/>
<circle cx="76.6" cy="700.2" r="0.8" fill="#ddd"/>
<rect x="76" y="703.5" width="2" height="1" fill="#3a3a3a" />
<rect x="79.5" y="703.5" width="2" height="1" fill="#3a3a3a" />
<rect x="82.5" y="703.5" width="2" height="1" fill="#3a3a3a" />
<rect x="76" y="706" width="2" height="1" fill="#3a3a3a" />
<rect x="79.5" y="706" width="2" height="1" fill="#3a3a3a" />
<rect x="82.5" y="706" width="2" height="1" fill="#3a3a3a" />
<rect x="76" y="708.3" width="2" height="1" fill="#3a3a3a" />
<rect x="79.5" y="708.3" width="2" height="1" fill="#3a3a3a" />
<rect x="82.5" y="708.3" width="2" height="1" fill="#3a3a3a" />
<rect x="727" y="695" width="38" height="21" fill="#c6c6c6" />
<rect x="739.5" y="698.5" width="12" height="12" fill="none" stroke="#6d6d6d" stroke-width="1" />
<rect x="743" y="699" width="1" height="11" fill="#6d6d6d" />
<rect x="740" y="702" width="11" height="1" fill="#6d6d6d" />
<rect x="747" y="699" width="1" height="11" fill="#6d6d6d" />
<rect x="740" y="706" width="11" height="1" fill="#6d6d6d" />
<rect x="777.5" y="698.5" width="13" height="12" fill="none" stroke="#6d6d6d" stroke-width="1" />
<rect x="780.5" y="701.5" width="7" height="6" fill="none" stroke="#6d6d6d" stroke-width="1" />
<rect x="782" y="703" width="4" height="1" fill="#6d6d6d" />
<rect x="782" y="705" width="4" height="1" fill="#6d6d6d" />
<rect x="815.5" y="698.5" width="13" height="12" fill="none" stroke="#6d6d6d" stroke-width="1" />
<path d="M815.5 705.5h8.5v-7M819.5 698.5v7" fill="none" stroke="#6d6d6d" stroke-width="1" />
<rect x="846" y="705" width="6" height="2" fill="#555" />
<rect x="857" y="705" width="99" height="1" fill="#9a9a9a" />
<rect x="904" y="699" width="5" height="11" fill="#6d6d6d" />
<path d="M959 705h7.5M962.75 701v7.5" fill="none" stroke="#555" stroke-width="2" />
<text xml:space="preserve" x="978.5" y="708.3" font-size="12" fill="#262626" textLength="30" lengthAdjust="spacingAndGlyphs" font-family="Liberation Sans" >100 %</text>
<rect x="0" y="0" width="1" height="717" fill="#0b6e38" />
<rect x="1027" y="0" width="1" height="717" fill="#0b6e38" />
<rect x="0" y="716" width="1028" height="1" fill="#0b6e38" />
<rect x="1" y="65" width="1" height="651" fill="#ffffff" />
<rect x="1026" y="65" width="1" height="651" fill="#ffffff" />
<rect x="1" y="715" width="1026" height="1" fill="#ffffff" />
</svg>
</body></html>
